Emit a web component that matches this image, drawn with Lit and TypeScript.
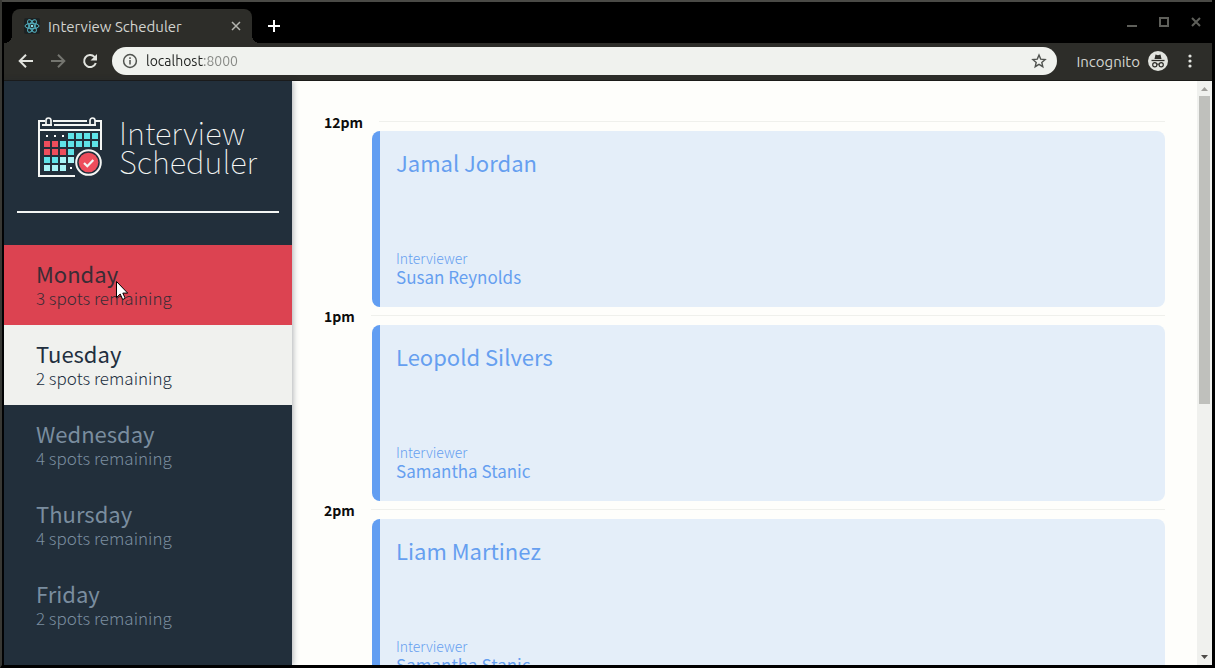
import { LitElement, html, css, svg } from "lit";
import { customElement, property } from "lit/decorators.js";

interface Day {
  name: string;
  spots: number;
  state: "hovered" | "selected" | "idle";
}

interface Appointment {
  time: string;
  student: string;
  interviewer: string;
}

const DAYS: Day[] = [
  { name: "Monday", spots: 3, state: "hovered" },
  { name: "Tuesday", spots: 2, state: "selected" },
  { name: "Wednesday", spots: 4, state: "idle" },
  { name: "Thursday", spots: 4, state: "idle" },
  { name: "Friday", spots: 2, state: "idle" },
];

const APPOINTMENTS: Appointment[] = [
  { time: "12pm", student: "Jamal Jordan", interviewer: "Susan Reynolds" },
  { time: "1pm", student: "Leopold Silvers", interviewer: "Samantha Stanic" },
  { time: "2pm", student: "Liam Martinez", interviewer: "Samantha Stanic" },
];

const APP_FONT = css`"Source Sans Pro", "Noto Sans CJK JP", sans-serif`;

// Calendar cells, one string per row: w = dot, c = cyan, r = red, p = pale.
const CELLS = ["wwwcccc", "rrccccc", "rrrc...", "ccpp...", "pppw..."];
const CELL_FILL: Record<string, string> = { c: "#5fe3e8", r: "#ee4d5c", p: "#a9f4f7" };

@customElement("browser-bar")
class BrowserBar extends LitElement {
  static styles = css`
    :host {
      display: block;
      font-family: Ubuntu, "Noto Sans", sans-serif;
      font-size: 14px;
      color: #d3d4d0;
    }
    button {
      display: grid;
      place-items: center;
      padding: 0;
      border: 0;
      background: none;
      color: inherit;
    }
    svg {
      display: block;
    }
    .strip {
      display: flex;
      align-items: flex-end;
      height: 41px;
      padding: 0 8px;
      background: #000;
    }
    .tab {
      position: relative;
      display: flex;
      align-items: center;
      box-sizing: border-box;
      width: 240px;
      height: 34px;
      padding: 0 8px 0 12px;
      border-radius: 8px 8px 0 0;
      background: #2d2d29;
    }
    .tab::before,
    .tab::after {
      content: "";
      position: absolute;
      bottom: 0;
      width: 8px;
      height: 8px;
    }
    .tab::before {
      right: 100%;
      background: radial-gradient(circle at 0 0, #000 8px, #2d2d29 8px);
    }
    .tab::after {
      left: 100%;
      background: radial-gradient(circle at 100% 0, #000 8px, #2d2d29 8px);
    }
    .title {
      flex: 1;
      margin-left: 8px;
      font-size: 15px;
    }
    .close {
      width: 16px;
      height: 16px;
      color: #b4b5b0;
    }
    .new {
      width: 28px;
      height: 34px;
      margin-left: 8px;
      color: #fff;
    }
    .window {
      display: flex;
      gap: 16px;
      align-self: flex-start;
      margin-left: auto;
      color: #5e5f5a;
      height: 40px;
      align-items: center;
    }
    .tools {
      display: flex;
      align-items: center;
      height: 36px;
      padding: 0 8px 1px;
      background: #2d2d29;
      border-bottom: 1px solid #1c1c19;
    }
    .nav {
      width: 28px;
      height: 28px;
      margin-right: 4px;
      color: #e2e4df;
    }
    .nav:disabled {
      color: #74756f;
    }
    .address {
      flex: 1;
      display: flex;
      align-items: center;
      box-sizing: border-box;
      height: 28px;
      margin-left: 4px;
      padding: 0 10px;
      border-radius: 14px;
      background: #f0f2ee;
      color: #50534f;
    }
    .url {
      flex: 1;
      min-width: 0;
      margin: 0 8px;
      padding: 0;
      border: 0;
      outline: 0;
      font: inherit;
      color: transparent;
      background: linear-gradient(90deg, #202220 58px, #858783 58px);
      -webkit-background-clip: text;
      background-clip: text;
    }
    .mode {
      display: flex;
      align-items: center;
      gap: 8px;
      margin-left: 19px;
      font-size: 15px;
    }
    .menu {
      width: 28px;
      height: 28px;
      margin-left: 8px;
      color: #e2e4df;
    }
  `;

  render() {
    return html`
      <div class="strip">
        <div class="tab">
          <svg width="16" height="16" viewBox="0 0 16 16" fill="none" stroke="#55b4c4">
            <rect width="16" height="16" rx="2" fill="#1d2223" stroke="none" />
            <ellipse cx="8" cy="8" rx="7" ry="2.7" />
            <ellipse cx="8" cy="8" rx="7" ry="2.7" transform="rotate(60 8 8)" />
            <ellipse cx="8" cy="8" rx="7" ry="2.7" transform="rotate(120 8 8)" />
            <circle cx="8" cy="8" r="1.3" fill="#8fe0ea" stroke="none" />
          </svg>
          <span class="title">Interview Scheduler</span>
          <button class="close" aria-label="Close tab">
            <svg width="10" height="10" viewBox="0 0 10 10" stroke="currentColor" stroke-width="1.5">
              <path d="M1 1l8 8M9 1l-8 8" />
            </svg>
          </button>
        </div>
        <button class="new" aria-label="New tab">
          <svg width="12" height="12" viewBox="0 0 12 12" stroke="currentColor" stroke-width="2">
            <path d="M6 0v12M0 6h12" />
          </svg>
        </button>
        <div class="window">
          <button aria-label="Minimize">
            <svg width="16" height="16" viewBox="0 0 16 16" stroke="currentColor" stroke-width="2">
              <path d="M3 12h10" />
            </svg>
          </button>
          <button aria-label="Maximize">
            <svg width="16" height="16" viewBox="0 0 16 16" fill="none" stroke="currentColor" stroke-width="2">
              <path d="M4 4h8v8H4z" />
            </svg>
          </button>
          <button aria-label="Close window">
            <svg width="16" height="16" viewBox="0 0 16 16" stroke="currentColor" stroke-width="2">
              <path d="M4 4l8 8M12 4l-8 8" />
            </svg>
          </button>
        </div>
      </div>
      <div class="tools">
        <button class="nav" aria-label="Back">
          <svg width="16" height="16" viewBox="0 0 16 16" fill="none" stroke="currentColor" stroke-width="2">
            <path d="M15 8H2.5M8 1.700L1.700 8L8 14.300" />
          </svg>
        </button>
        <button class="nav" aria-label="Forward" disabled>
          <svg width="16" height="16" viewBox="0 0 16 16" fill="none" stroke="currentColor" stroke-width="2">
            <path d="M1 8h12.500M8 1.700L14.300 8L8 14.300" />
          </svg>
        </button>
        <button class="nav" aria-label="Reload">
          <svg width="16" height="16" viewBox="0 0 16 16" fill="none" stroke="currentColor" stroke-width="2">
            <path d="M13.800 10a6 6 0 1 1-1.300-6.100L14 5.500" />
            <path d="M15 1v6.500H8.500z" fill="currentColor" stroke="none" />
          </svg>
        </button>
        <div class="address">
          <svg width="16" height="16" viewBox="0 0 16 16" fill="none" stroke="currentColor" stroke-width="1.500">
            <circle cx="8" cy="8" r="6.400" />
            <path d="M8 7v4.500M8 4.300v1.600" />
          </svg>
          <input class="url" type="text" aria-label="Address" value="localhost:8000" />
          <svg width="16" height="16" viewBox="0 0 16 16" fill="none" stroke="currentColor" stroke-width="1.400">
            <path d="M8 2l1.700 4.100 4.400.4-3.300 2.900 1 4.300L8 11.400l-3.800 2.300 1-4.300-3.300-2.900 4.400-.4z" />
          </svg>
        </div>
        <div class="mode">
          <span>Incognito</span>
          <svg width="20" height="20" viewBox="0 0 20 20" fill="none" stroke="#2d2d29">
            <circle cx="10" cy="10" r="10" fill="#e2e4df" stroke="none" />
            <path d="M6.500 8l1-4.500 2.500.7 2.500-.7 1 4.500z" fill="#2d2d29" stroke="none" />
            <path d="M3.500 9.500h13" stroke-width="1.300" />
            <circle cx="6.800" cy="13.700" r="2.100" stroke-width="1.200" />
            <circle cx="13.200" cy="13.700" r="2.100" stroke-width="1.200" />
            <path d="M8.900 13.300q1.100-.6 2.200 0" />
          </svg>
        </div>
        <button class="menu" aria-label="Browser menu">
          <svg width="4" height="14" viewBox="0 0 4 14" fill="currentColor">
            <circle cx="2" cy="2" r="1.600" />
            <circle cx="2" cy="7" r="1.600" />
            <circle cx="2" cy="12" r="1.600" />
          </svg>
        </button>
      </div>
    `;
  }
}

@customElement("day-list")
class DayList extends LitElement {
  @property({ attribute: false }) days: Day[] = [];

  static styles = css`
    :host {
      display: block;
      font-family: ${APP_FONT};
    }
    .days {
      margin: 0;
      padding: 0;
      list-style: none;
    }
    .day {
      display: flex;
      flex-direction: column;
      justify-content: center;
      width: 100%;
      height: 80px;
      padding: 0 32px;
      border: 0;
      background: none;
      text-align: left;
      font-family: inherit;
      color: #7a8d9f;
    }
    .hovered {
      background: #dc4351;
      color: #3a2c35;
    }
    .selected {
      background: #f0f1ee;
      color: #222f3e;
    }
    .name {
      font-size: 22px;
      line-height: 26px;
    }
    .spots {
      font-size: 17px;
      line-height: 24px;
      font-weight: 300;
    }
  `;

  render() {
    return html`
      <ul class="days">
        ${this.days.map(
          (day) => html`
            <li>
              <button class="day ${day.state}">
                <span class="name">${day.name}</span>
                <span class="spots">${day.spots} spots remaining</span>
              </button>
            </li>
          `
        )}
      </ul>
    `;
  }
}

@customElement("appointment-slot")
class AppointmentSlot extends LitElement {
  @property({ attribute: false }) item!: Appointment;

  static styles = css`
    :host {
      display: block;
      font-family: ${APP_FONT};
    }
    .hour {
      display: flex;
      align-items: center;
      gap: 16px;
      height: 17px;
      margin-bottom: 1px;
    }
    .time {
      margin: 0;
      font-size: 14px;
      line-height: 20px;
      font-weight: 700;
      color: #0c0c0c;
    }
    .rule {
      flex: 1;
      height: 0;
      margin: 0;
      border: 0;
      border-top: 1px solid #eff0ec;
    }
    .card {
      display: flex;
      flex-direction: column;
      justify-content: space-between;
      box-sizing: border-box;
      height: 176px;
      margin-left: 48px;
      padding: 16px 16px 20px;
      border-left: 8px solid #629ef2;
      border-radius: 8px;
      background: #e4eef9;
      color: #669ff0;
    }
    .student {
      margin: 0;
      font-size: 22px;
      line-height: 30px;
      font-weight: 400;
    }
    .label {
      margin: 0;
      font-size: 14px;
      line-height: 18px;
      font-weight: 300;
    }
    .interviewer {
      margin: 0;
      font-size: 17px;
      line-height: 20px;
      font-weight: 400;
    }
  `;

  render() {
    const { time, student, interviewer } = this.item;
    return html`
      <div class="hour">
        <h4 class="time">${time}</h4>
        <hr class="rule" />
      </div>
      <article class="card">
        <h2 class="student">${student}</h2>
        <div>
          <h4 class="label">Interviewer</h4>
          <h3 class="interviewer">${interviewer}</h3>
        </div>
      </article>
    `;
  }
}

@customElement("app-root")
class AppRoot extends LitElement {
  static styles = css`
    :host {
      display: flex;
      flex-direction: column;
      box-sizing: border-box;
      height: 100vh;
      overflow: hidden;
      border: solid #000;
      border-width: 0 3px 3px 2px;
      border-left-color: #383834;
      background: #000;
      box-shadow: inset 0 2px #4a4a46;
      padding: 2px 0 0 2px;
      font-family: ${APP_FONT};
    }
    .page {
      flex: 1;
      min-height: 0;
      display: grid;
      grid-template-columns: 288px minmax(0, 1fr) 15px;
      background: #fefefb;
    }
    .sidebar {
      z-index: 1;
      background: #222f3b;
      box-shadow: 1px 0 6px rgba(20, 30, 50, 0.35);
    }
    .brand {
      display: flex;
      align-items: center;
      gap: 16px;
      height: 130px;
      margin: 0 13px 32px;
      padding-left: 20px;
      border-bottom: 2px solid #f4f6f4;
    }
    .brand-name {
      margin: 0;
      font-size: 31px;
      line-height: 29px;
      font-weight: 100;
      color: #f4f6f4;
    }
    .schedule {
      overflow: hidden;
      padding: 32px 32px 0;
    }
    .scrollbar {
      display: flex;
      flex-direction: column;
      align-items: center;
      background: #f0f1ee;
    }
    .arrow {
      display: block;
    }
    .track {
      flex: 1;
      width: 11px;
    }
    .thumb {
      height: 55.6%;
      background: #bfc0bc;
    }
    .pointer {
      position: absolute;
      left: 115px;
      top: 280px;
      z-index: 2;
    }
  `;

  private renderMark() {
    return svg`
      <svg width="66" height="62" viewBox="0 -1 66 62" fill="none" stroke="#f4f6f4" stroke-width="2">
        <path d="M8 5H2v55h36M16 5h34M58 5h6v29M2 14h62M5 9h10M17 9h42" />
        <path d="M9 9V4.500a2.500 2.500 0 0 1 5 0V9M53 9V4.500a2.500 2.500 0 0 1 5 0V9" stroke-width="1.700" />
        ${CELLS.map((row, y) =>
          [...row].map((kind, x) => {
            if (kind === ".") return null;
            return kind === "w"
              ? svg`<rect x=${9 + x * 8} y=${19 + y * 8} width="2" height="2" fill="#fff" stroke="none" />`
              : svg`<rect x=${7 + x * 8} y=${17 + y * 8} width="6" height="6" fill=${CELL_FILL[kind]} stroke="none" />`;
          })
        )}
        <circle cx="51.500" cy="46.500" r="14" fill="#222f3b" stroke="none" />
        <circle cx="51.500" cy="46.500" r="12.300" />
        <circle cx="51.500" cy="46.500" r="9.800" fill="#ee4d5c" stroke="none" />
        <path d="M47 47l3.300 3.300 6-6.300" stroke-width="2.200" />
      </svg>
    `;
  }

  render() {
    return html`
      <browser-bar></browser-bar>
      <div class="page">
        <aside class="sidebar">
          <header class="brand">
            ${this.renderMark()}
            <h1 class="brand-name">Interview<br />Scheduler</h1>
          </header>
          <nav><day-list .days=${DAYS}></day-list></nav>
        </aside>
        <main class="schedule">
          ${APPOINTMENTS.map((item) => html`<appointment-slot .item=${item}></appointment-slot>`)}
        </main>
        <div class="scrollbar">
          <svg class="arrow" width="15" height="15" viewBox="0 0 15 15" fill="#a09f9b"><path d="M4 10l3.500-4L11 10z" /></svg>
          <div class="track"><div class="thumb"></div></div>
          <svg class="arrow" width="15" height="15" viewBox="0 0 15 15" fill="#4d4b48"><path d="M4 5l3.500 4L11 5z" /></svg>
        </div>
      </div>
      <svg class="pointer" width="14" height="22" viewBox="0 0 14 22" fill="#fff" stroke="#000">
        <path d="M1.500 1.500v16l3.700-3.500 2.500 5.500 2.500-1.200-2.400-5.200h4.900z" />
      </svg>
    `;
  }
}
